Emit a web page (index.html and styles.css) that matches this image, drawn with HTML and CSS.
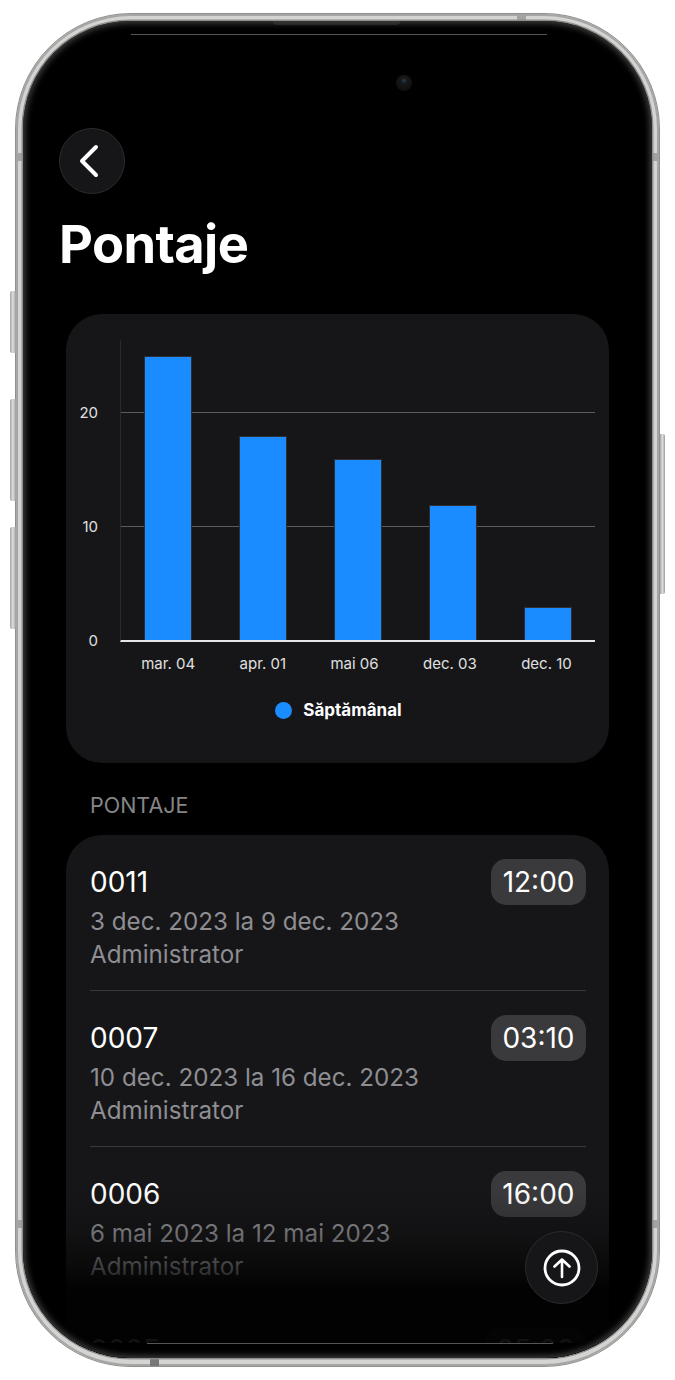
FILE: index.html
```html
<!DOCTYPE html>
<html lang="ro">
<head>
    <meta charset="UTF-8">
    <meta name="viewport" content="width=device-width, initial-scale=1.0">
    <title>Pontaje</title>
    <link rel="stylesheet" href="styles.css">
</head>
<body>
    <div class="phone">
        <span class="side-btn btn-1"></span>
        <span class="side-btn btn-2"></span>
        <span class="side-btn btn-3"></span>
        <span class="side-btn btn-4"></span>
        <span class="band band-left-top"></span>
        <span class="band band-left-bottom"></span>
        <span class="band band-right-top"></span>
        <span class="band band-right-bottom"></span>
        <span class="band band-top"></span>
        <span class="band band-bottom"></span>

        <div class="screen">
            <span class="speaker"></span>
            <span class="top-line"></span>
            <span class="camera"></span>

            <button class="back-btn" aria-label="Înapoi">
                <svg width="24" height="36" viewBox="0 0 24 36">
                    <path d="M20 4 L6 18 L20 32" fill="none" stroke="#fff" stroke-width="4" stroke-linecap="round" stroke-linejoin="round"/>
                </svg>
            </button>
            <h1 class="title">Pontaje</h1>

            <section class="card chart-card">
                <div class="chart">
                    <div class="y-axis">
                        <span>20</span>
                        <span>10</span>
                        <span>0</span>
                    </div>
                    <div class="plot">
                        <span class="grid-line" style="bottom: 227px"></span>
                        <span class="grid-line" style="bottom: 113px"></span>
                        <div class="bar" style="height: 284px"></div>
                        <div class="bar" style="height: 204px"></div>
                        <div class="bar" style="height: 181px"></div>
                        <div class="bar" style="height: 135px"></div>
                        <div class="bar" style="height: 33px"></div>
                    </div>
                </div>
                <div class="x-axis">
                    <span>mar. 04</span>
                    <span>apr. 01</span>
                    <span>mai 06</span>
                    <span>dec. 03</span>
                    <span>dec. 10</span>
                </div>
                <div class="legend">
                    <span class="legend-dot"></span>
                    <span class="legend-text">Săptămânal</span>
                </div>
            </section>

            <h2 class="section-label">PONTAJE</h2>

            <section class="card list-card">
                <div class="row">
                    <div class="row-info">
                        <div class="row-code">0011</div>
                        <div class="row-sub">3 dec. 2023 la 9 dec. 2023</div>
                        <div class="row-sub">Administrator</div>
                    </div>
                    <span class="pill">12:00</span>
                </div>
                <div class="row">
                    <div class="row-info">
                        <div class="row-code">0007</div>
                        <div class="row-sub">10 dec. 2023 la 16 dec. 2023</div>
                        <div class="row-sub">Administrator</div>
                    </div>
                    <span class="pill">03:10</span>
                </div>
                <div class="row">
                    <div class="row-info">
                        <div class="row-code">0006</div>
                        <div class="row-sub">6 mai 2023 la 12 mai 2023</div>
                        <div class="row-sub">Administrator</div>
                    </div>
                    <span class="pill">16:00</span>
                </div>
                <div class="row">
                    <div class="row-info">
                        <div class="row-code">0005</div>
                    </div>
                    <span class="pill">05:00</span>
                </div>
            </section>

            <div class="fade"></div>
            <div class="bottom-band"></div>

            <button class="top-btn" aria-label="Sus">
                <svg width="40" height="40" viewBox="0 0 40 40">
                    <circle cx="20" cy="20" r="17" fill="none" stroke="#fff" stroke-width="2.8"/>
                    <path d="M20 29 V11.5 M12.5 18.5 L20 11.5 L27.5 18.5" fill="none" stroke="#fff" stroke-width="2.6" stroke-linecap="round" stroke-linejoin="round"/>
                </svg>
            </button>
        </div>
    </div>
</body>
</html>
```

FILE: styles.css
```css
* {
    box-sizing: border-box;
}
body {
    margin: 0;
    background: #fff;
    font-family: Inter, "Liberation Sans", sans-serif;
}
.phone {
    position: relative;
    width: 645px;
    height: 1354px;
    margin: 13px 0 0 15px;
    padding: 7px 7px 8px 7px;
    border: 1px solid #8f8f8f;
    border-radius: 116px;
    background: #d4d4d2;
    box-shadow: inset 0 0 0 2px #a6a6a4;
}

/* boutons et bandes du cadre */
.side-btn {
    position: absolute;
    width: 6px;
    border-radius: 2px 0 0 2px;
    background: linear-gradient(90deg, #a5a5a3, #dedede 50%, #9a9a98);
}
.btn-1 { left: -6px; top: 277px; height: 62px; }
.btn-2 { left: -6px; top: 385px; height: 102px; }
.btn-3 { left: -6px; top: 513px; height: 102px; }
.btn-4 { left: 644px; top: 420px; height: 160px; width: 5px; border-radius: 0 2px 2px 0; }
.band {
    position: absolute;
    background: #a3a3a1;
}
.band-left-top { left: 0; top: 139px; width: 7px; height: 8px; }
.band-left-bottom { left: 0; top: 1206px; width: 7px; height: 8px; }
.band-right-top { right: 0; top: 139px; width: 7px; height: 8px; }
.band-right-bottom { right: 0; top: 1206px; width: 7px; height: 8px; }
.band-top { left: 501px; top: 0; width: 9px; height: 7px; }
.band-bottom { left: 134px; bottom: 0; width: 9px; height: 8px; background: #777; }

.screen {
    position: relative;
    height: 100%;
    padding: 107px 43px 0;
    overflow: hidden;
    border-radius: 107px;
    background: #000;
    box-shadow: 0 0 0 1.5px #8e8e8c;
}
/* reflet sombre le long du bord */
.screen::after {
    content: "";
    position: absolute;
    inset: 0;
    border-radius: 107px;
    box-shadow: inset 0 0 6px 2px #444;
    pointer-events: none;
}
.speaker {
    position: absolute;
    left: 250px;
    top: 0;
    width: 127px;
    height: 4px;
    border-radius: 0 0 4px 4px;
    background: #1c1c1c;
}
.top-line {
    position: absolute;
    left: 108px;
    top: 13px;
    width: 416px;
    height: 1px;
    background: #555;
}
.camera {
    position: absolute;
    left: 373px;
    top: 54px;
    width: 16px;
    height: 16px;
    border-radius: 50%;
    background: radial-gradient(circle at 50% 35%, #2a3f5f 0, #181818 22%, #111 60%, #0a0a0a 100%);
}

.back-btn {
    display: flex;
    align-items: center;
    justify-content: center;
    width: 66px;
    height: 66px;
    margin-left: -7px;
    padding: 0 8px 0 0;
    border: 1px solid #2c2c2e;
    border-radius: 50%;
    background: #161618;
}
.title {
    margin: 15px 0 0 -7px;
    color: #fff;
    font-size: 52.4px;
    font-weight: 700;
    line-height: 70px;
    letter-spacing: -0.6px;
}

.card {
    border-radius: 36px;
    background: #161618;
}
.chart-card {
    width: 543px;
    height: 449px;
    margin-top: 35px;
    padding: 26px 14px 0 12px;
}
.chart {
    display: flex;
}
.y-axis {
    display: flex;
    flex-direction: column;
    justify-content: space-between;
    width: 20px;
    height: 311px;
    margin-bottom: -9px;
    padding-top: 63px;
    color: #e0e0e0;
    font-size: 15px;
    line-height: 20px;
    text-align: right;
}
.plot {
    position: relative;
    display: flex;
    align-items: flex-end;
    justify-content: space-around;
    width: 475px;
    height: 302px;
    margin-left: 22px;
    border-left: 1px solid #2a2a2c;
    border-bottom: 2px solid #e6e6e6;
}
.grid-line {
    position: absolute;
    left: 0;
    right: 0;
    height: 1px;
    background: #5c5c5c;
}
.bar {
    position: relative;
    width: 48px;
    border: 1px solid #2f2f31;
    border-bottom: 0;
    background: #1a8cff;
}
.x-axis {
    display: flex;
    justify-content: space-around;
    width: 475px;
    margin: 12px 0 0 41px;
    color: #e0e0e0;
    font-size: 15px;
    line-height: 20px;
}
.legend {
    display: flex;
    align-items: center;
    justify-content: center;
    gap: 11px;
    margin-top: 26px;
    padding-left: 4px;
}
.legend-dot {
    width: 17px;
    height: 17px;
    border-radius: 50%;
    background: #1a8cff;
}
.legend-text {
    color: #fff;
    font-size: 17px;
    font-weight: 700;
    line-height: 20px;
}

.section-label {
    margin: 28px 0 0 24px;
    color: #858587;
    font-size: 21.5px;
    font-weight: 400;
    line-height: 28px;
}
.list-card {
    width: 543px;
    margin-top: 16px;
    padding: 0 23px 0 24px;
}
.row {
    display: flex;
    justify-content: space-between;
    align-items: flex-start;
    height: 156px;
    padding-top: 24px;
    border-bottom: 1px solid #3a3a3c;
}
.row-code {
    color: #fff;
    font-size: 28px;
    line-height: 46px;
}
.row-sub {
    color: #8e8e93;
    font-size: 24.2px;
    line-height: 33px;
}
.pill {
    height: 46px;
    padding: 0 11.5px;
    border-radius: 15px;
    background: #3a3a3c;
    color: #fff;
    font-size: 28px;
    line-height: 46px;
}

.fade {
    position: absolute;
    left: 0;
    right: 0;
    bottom: 0;
    height: 170px;
    background: linear-gradient(180deg, rgba(0,0,0,0) 0, rgba(0,0,0,.2) 26%, rgba(0,0,0,.55) 46%, rgba(0,0,0,.93) 60%, rgba(0,0,0,.93) 100%);
}
.bottom-band {
    position: absolute;
    left: 0;
    right: 0;
    bottom: 0;
    height: 15px;
    background: #000;
}
.bottom-band::before {
    content: "";
    position: absolute;
    left: 124px;
    right: 99px;
    top: 0;
    height: 1px;
    background: #555;
}
.top-btn {
    position: absolute;
    left: 502px;
    top: 1210px;
    display: flex;
    align-items: center;
    justify-content: center;
    width: 73px;
    height: 73px;
    padding: 0;
    border: 1px solid #2c2c2e;
    border-radius: 50%;
    background: #161618;
}
```
